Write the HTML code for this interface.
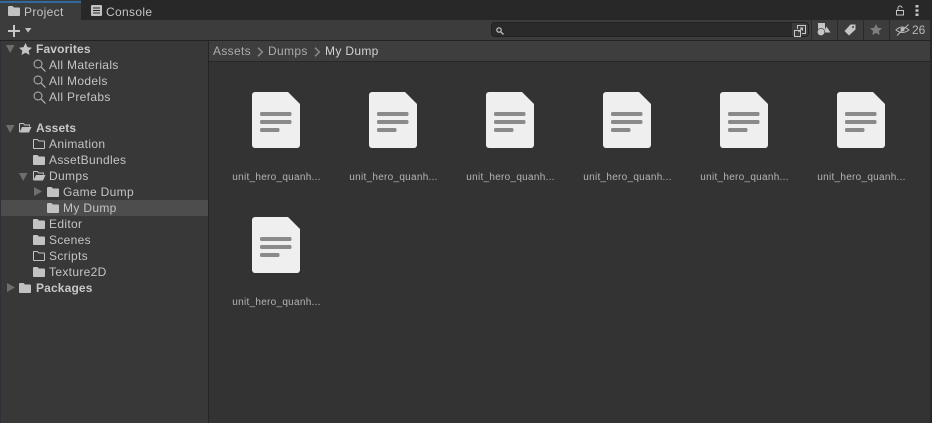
<!DOCTYPE html>
<html><head><meta charset="utf-8"><style>
html,body{margin:0;padding:0;background:#383838}
#r{position:relative;width:932px;height:423px;overflow:hidden;background:#383838;font-family:"Liberation Sans",sans-serif;font-size:12px;color:#c4c4c4}
#r div,#r svg,#r span{position:absolute}
.t{white-space:nowrap;line-height:16px;height:16px;letter-spacing:.33px}
.b{font-weight:bold;color:#c8c8c8;letter-spacing:.15px}
.f{white-space:nowrap;font-size:10px;line-height:12px;color:#b4b4b4;width:117px;text-align:center;letter-spacing:.28px}
</style></head><body><div id="r">
<svg width="0" height="0" style="position:absolute"><defs>
<symbol id="fd" viewBox="0 0 12 10"><path d="M0 1a1 1 0 0 1 1-1h3.500l1.500 1.500h5a1 1 0 0 1 1 1V9a1 1 0 0 1-1 1H1a1 1 0 0 1-1-1z" fill="#c2c2c2"/></symbol>
<symbol id="fe" viewBox="0 0 12 10"><path d="M.5 1a.5.500 0 0 1 .5-.5h3.300l1.500 1.500H11a.5.500 0 0 1 .5.500V9a.5.500 0 0 1-.5.500H1a.5.500 0 0 1-.5-.5z" fill="none" stroke="#c2c2c2"/></symbol>
<symbol id="fo" viewBox="0 0 13 10"><path d="M.5 9V1a.5.500 0 0 1 .5-.5h3.300l1.500 1.500H10.500V3.500" fill="none" stroke="#c2c2c2"/><path d="M.5 9.500L3 4h9.500l-2.500 5.500z" fill="#c2c2c2"/></symbol>
<symbol id="mg" viewBox="0 0 13 13"><circle cx="5" cy="5" r="4" fill="none" stroke="#b4b4b4" stroke-width="1"/><path d="M8 8l4.500 4.500" stroke="#b4b4b4" stroke-width="1.200"/></symbol>
<symbol id="doc" viewBox="0 0 48 56"><path d="M3 0H36L48 12V53a3 3 0 0 1-3 3H3a3 3 0 0 1-3-3V3a3 3 0 0 1 3-3z" fill="#efefef"/><rect x="8" y="20" width="31.500" height="4" rx="1.500" fill="#8a8a8a"/><rect x="8" y="28" width="31.500" height="4" rx="1.500" fill="#8a8a8a"/><rect x="8" y="36" width="19.500" height="4" rx="1.500" fill="#8a8a8a"/></symbol>
</defs></svg>

<div style="left:0;top:0;width:932px;height:20px;background:#282828"></div>
<div style="left:0;top:0;width:81px;height:20px;background:#3c3c3c"></div>
<div style="left:0;top:1px;width:81px;height:2px;background:#2f6a9e"></div>
<svg style="left:8px;top:6px" width="12" height="10"><use href="#fd"/></svg>
<div class="t" style="left:24px;top:4px;font-size:12px">Project</div>
<svg style="left:91px;top:5px" width="11" height="11" viewBox="0 0 11 11"><rect width="11" height="11" rx="1" fill="#c2c2c2"/><path d="M2 3h7M2 5.500h7M2 8h7" stroke="#282828"/></svg>
<div class="t" style="left:106px;top:4px">Console</div>
<svg style="left:895px;top:5px" width="11" height="11" viewBox="0 0 11 11"><rect x="1.500" y="5.500" width="7" height="4.500" fill="none" stroke="#c4c4c4"/><path d="M3 5.500V3a2 2 0 0 1 4 0" fill="none" stroke="#c4c4c4"/></svg>
<svg style="left:915px;top:5px" width="4" height="11"><rect x="0.500" y="0" width="3" height="2.500" fill="#c4c4c4"/><rect x="0.500" y="4.300" width="3" height="2.500" fill="#c4c4c4"/><rect x="0.500" y="8.500" width="3" height="2.500" fill="#c4c4c4"/></svg>

<div style="left:0;top:20px;width:932px;height:20px;background:#3c3c3c"></div>
<div style="left:0;top:40px;width:932px;height:1px;background:#232323"></div>
<svg style="left:8px;top:25px" width="12" height="12"><path d="M6 0v12M0 6h12" stroke="#c8c8c8" stroke-width="2"/></svg>
<svg style="left:24px;top:28px" width="8" height="5"><path d="M1 0h6.500L4 4.500z" fill="#c2c2c2"/></svg>

<div style="left:491px;top:22px;width:316px;height:13px;background:#2a2a2a;border:1px solid #212121;border-radius:4px;box-sizing:content-box"></div>
<svg style="left:496px;top:27px" width="8" height="8" viewBox="0 0 8 8"><circle cx="3" cy="3" r="2.200" fill="none" stroke="#c4c4c4" stroke-width="1.200"/><path d="M4.800 4.800L7.500 7.500" stroke="#c4c4c4" stroke-width="1.300"/></svg>
<div style="left:792px;top:23px;width:16px;height:13px;background:#3c3c3c;border-radius:0 3px 3px 0"></div>
<svg style="left:794px;top:25px" width="12" height="12" viewBox="0 0 12 12"><path d="M3.500 4V.5h8v8H8" fill="none" stroke="#c8c8c8"/><rect x=".5" y="5.500" width="6" height="6" fill="none" stroke="#c8c8c8"/><path d="M4.500 7L8.500 3M6 3H8.500V5.500" fill="none" stroke="#c8c8c8"/></svg>

<div style="left:811px;top:20px;width:1px;height:20px;background:#2a2a2a"></div>
<div style="left:837px;top:20px;width:1px;height:20px;background:#2a2a2a"></div>
<div style="left:863px;top:20px;width:1px;height:20px;background:#2a2a2a"></div>
<div style="left:889px;top:20px;width:1px;height:20px;background:#2a2a2a"></div>
<svg style="left:817px;top:23px" width="15" height="14" viewBox="0 0 15 14"><rect x="1" y="0" width="7" height="7" fill="#c4c4c4"/><path d="M9.500 3.500L13.500 9.500H6.500z" fill="#c4c4c4"/><circle cx="4" cy="9" r="3.700" fill="#c4c4c4" stroke="#3c3c3c" stroke-width=".6"/></svg>
<svg style="left:844px;top:24px" width="12" height="12" viewBox="0 0 12 12"><path d="M6.500 0.500H11.500V5.500L5 11.500L0.500 7z" fill="#c4c4c4"/><circle cx="9" cy="3" r="1" fill="#3c3c3c"/></svg>
<svg style="left:870px;top:24px" width="12" height="11" viewBox="0 0 12 11"><path d="M6 0l1.800 3.800 4.200.5-3.100 2.800.8 3.900L6 9 2.300 11l.8-3.900L0 4.300l4.200-.5z" fill="#7e7e7e"/></svg>
<svg style="left:895px;top:24px" width="15" height="12" viewBox="0 0 15 12"><path d="M1 6Q7 0 14 6Q7 11 1 6z" fill="none" stroke="#b8b8b8"/><circle cx="7.500" cy="5.500" r="2" fill="#b8b8b8"/><path d="M2 11.500L13.500 .5" stroke="#b8b8b8"/></svg>
<div class="t" style="left:912px;top:22px;letter-spacing:0;font-size:12px;color:#b8b8b8">26</div>

<div style="left:0;top:41px;width:1px;height:382px;background:#2c3238"></div>
<div style="left:208px;top:41px;width:1px;height:382px;background:#242424"></div>
<div style="left:209px;top:41px;width:723px;height:382px;background:#333333"></div>
<div style="left:209px;top:41px;width:723px;height:20px;background:#3e3e3e"></div>
<div style="left:209px;top:61px;width:723px;height:1px;background:#282828"></div>
<div style="left:930px;top:20px;width:2px;height:403px;background:#282828"></div>

<div class="t" style="left:213px;top:43px;color:#ababab">Assets</div>
<svg style="left:257px;top:47px" width="7" height="10"><path d="M1 .7l4.300 4.300-4.300 4.300" fill="none" stroke="#8a8a8a" stroke-width="1.500"/></svg>
<div class="t" style="left:268px;top:43px;color:#ababab">Dumps</div>
<svg style="left:314px;top:47px" width="7" height="10"><path d="M1 .7l4.300 4.300-4.300 4.300" fill="none" stroke="#8a8a8a" stroke-width="1.500"/></svg>
<div class="t" style="left:325px;top:43px;color:#d2d2d2">My Dump</div>

<svg style="left:6px;top:45px" width="9" height="8"><path d="M0 0h8.500L4.200 8z" fill="#6e6e6e"/></svg>
<svg style="left:19px;top:43px" width="13" height="12" viewBox="0 0 12 11"><path d="M6 0l1.800 3.800 4.200.5-3.100 2.800.8 3.900L6 9 2.300 11l.8-3.900L0 4.300l4.200-.5z" fill="#c4c4c4"/></svg>
<div class="t b" style="left:36px;top:41px">Favorites</div>
<svg style="left:33px;top:59px" width="13" height="13"><use href="#mg"/></svg>
<div class="t" style="left:49px;top:57px">All Materials</div>
<svg style="left:33px;top:75px" width="13" height="13"><use href="#mg"/></svg>
<div class="t" style="left:49px;top:73px">All Models</div>
<svg style="left:33px;top:91px" width="13" height="13"><use href="#mg"/></svg>
<div class="t" style="left:49px;top:89px">All Prefabs</div>

<svg style="left:6px;top:125px" width="9" height="8"><path d="M0 0h8.500L4.200 8z" fill="#6e6e6e"/></svg>
<svg style="left:19px;top:123px" width="13" height="10"><use href="#fo"/></svg>
<div class="t b" style="left:36px;top:120px">Assets</div>
<svg style="left:33px;top:139px" width="12" height="10"><use href="#fe"/></svg>
<div class="t" style="left:49px;top:136px">Animation</div>
<svg style="left:33px;top:155px" width="12" height="10"><use href="#fd"/></svg>
<div class="t" style="left:49px;top:152px">AssetBundles</div>
<svg style="left:19px;top:173px" width="9" height="8"><path d="M0 0h8.500L4.200 8z" fill="#6e6e6e"/></svg>
<svg style="left:33px;top:171px" width="13" height="10"><use href="#fo"/></svg>
<div class="t" style="left:49px;top:168px">Dumps</div>
<svg style="left:34px;top:187px" width="8" height="9"><path d="M0 0l8 4.500L0 9z" fill="#6e6e6e"/></svg>
<svg style="left:47px;top:187px" width="12" height="10"><use href="#fd"/></svg>
<div class="t" style="left:63px;top:184px">Game Dump</div>
<div style="left:1px;top:200px;width:207px;height:16px;background:#4d4d4d"></div>
<svg style="left:47px;top:203px" width="12" height="10"><use href="#fd"/></svg>
<div class="t" style="left:63px;top:200px">My Dump</div>
<svg style="left:33px;top:219px" width="12" height="10"><use href="#fd"/></svg>
<div class="t" style="left:49px;top:216px">Editor</div>
<svg style="left:33px;top:235px" width="12" height="10"><use href="#fd"/></svg>
<div class="t" style="left:49px;top:232px">Scenes</div>
<svg style="left:33px;top:251px" width="12" height="10"><use href="#fe"/></svg>
<div class="t" style="left:49px;top:248px">Scripts</div>
<svg style="left:33px;top:267px" width="12" height="10"><use href="#fd"/></svg>
<div class="t" style="left:49px;top:264px">Texture2D</div>
<svg style="left:7px;top:283px" width="8" height="9"><path d="M0 0l8 4.500L0 9z" fill="#6e6e6e"/></svg>
<svg style="left:19px;top:283px" width="12" height="10"><use href="#fd"/></svg>
<div class="t b" style="left:36px;top:280px">Packages</div>

<svg style="left:252px;top:92px" width="48" height="56"><use href="#doc"/></svg>
<svg style="left:369px;top:92px" width="48" height="56"><use href="#doc"/></svg>
<svg style="left:486px;top:92px" width="48" height="56"><use href="#doc"/></svg>
<svg style="left:603px;top:92px" width="48" height="56"><use href="#doc"/></svg>
<svg style="left:720px;top:92px" width="48" height="56"><use href="#doc"/></svg>
<svg style="left:837px;top:92px" width="48" height="56"><use href="#doc"/></svg>
<svg style="left:252px;top:217px" width="48" height="56"><use href="#doc"/></svg>
<div class="f" style="left:218px;top:172px">unit_hero_quanh...</div>
<div class="f" style="left:335px;top:172px">unit_hero_quanh...</div>
<div class="f" style="left:452px;top:172px">unit_hero_quanh...</div>
<div class="f" style="left:569px;top:172px">unit_hero_quanh...</div>
<div class="f" style="left:686px;top:172px">unit_hero_quanh...</div>
<div class="f" style="left:803px;top:172px">unit_hero_quanh...</div>
<div class="f" style="left:218px;top:297px">unit_hero_quanh...</div>
</div></body></html>
